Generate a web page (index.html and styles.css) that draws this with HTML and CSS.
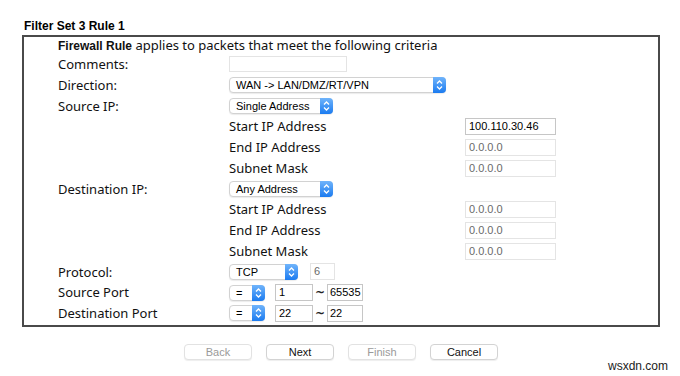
FILE: index.html
```html
<!DOCTYPE html>
<html>
<head>
<meta charset="utf-8">
<link rel="stylesheet" href="styles.css">
</head>
<body>
<div class="page">
  <h1 class="title">Filter Set 3 Rule 1</h1>
  <div class="box">
    <div class="row head"><b>Firewall Rule</b> applies to packets that meet the following criteria</div>
    <div class="row">
      <span>Comments:</span>
      <div class="ctl"><span class="input w-comment"></span></div>
      <span></span>
    </div>
    <div class="row">
      <span>Direction:</span>
      <div class="ctl"><div class="select w-dir"><span class="val">WAN -&gt; LAN/DMZ/RT/VPN</span><span class="step"><svg width="13" height="14" viewBox="0 0 13 14"><polyline points="4,5.5 6.5,3 9,5.5"/><polyline points="4,8.5 6.5,11 9,8.5"/></svg></span></div></div>
      <span></span>
    </div>
    <div class="row">
      <span>Source IP:</span>
      <div class="ctl"><div class="select w-addr"><span class="val">Single Address</span><span class="step"><svg width="13" height="14" viewBox="0 0 13 14"><polyline points="4,5.5 6.5,3 9,5.5"/><polyline points="4,8.5 6.5,11 9,8.5"/></svg></span></div></div>
      <span></span>
    </div>
    <div class="row">
      <span></span>
      <span>Start IP Address</span>
      <div class="ctl"><span class="input on w-ip">100.110.30.46</span></div>
    </div>
    <div class="row">
      <span></span>
      <span>End IP Address</span>
      <div class="ctl"><span class="input w-ip">0.0.0.0</span></div>
    </div>
    <div class="row">
      <span></span>
      <span>Subnet Mask</span>
      <div class="ctl"><span class="input w-ip">0.0.0.0</span></div>
    </div>
    <div class="row">
      <span>Destination IP:</span>
      <div class="ctl"><div class="select w-addr"><span class="val">Any Address</span><span class="step"><svg width="13" height="14" viewBox="0 0 13 14"><polyline points="4,5.5 6.5,3 9,5.5"/><polyline points="4,8.5 6.5,11 9,8.5"/></svg></span></div></div>
      <span></span>
    </div>
    <div class="row">
      <span></span>
      <span>Start IP Address</span>
      <div class="ctl"><span class="input w-ip">0.0.0.0</span></div>
    </div>
    <div class="row">
      <span></span>
      <span>End IP Address</span>
      <div class="ctl"><span class="input w-ip">0.0.0.0</span></div>
    </div>
    <div class="row">
      <span></span>
      <span>Subnet Mask</span>
      <div class="ctl"><span class="input w-ip">0.0.0.0</span></div>
    </div>
    <div class="row">
      <span>Protocol:</span>
      <div class="ctl gap12"><div class="select w-proto"><span class="val">TCP</span><span class="step"><svg width="13" height="14" viewBox="0 0 13 14"><polyline points="4,5.5 6.5,3 9,5.5"/><polyline points="4,8.5 6.5,11 9,8.5"/></svg></span></div><span class="input w-num">6</span></div>
      <span></span>
    </div>
    <div class="row">
      <span>Source Port</span>
      <div class="ctl gap10"><div class="select w-op"><span class="val">=</span><span class="step"><svg width="13" height="14" viewBox="0 0 13 14"><polyline points="4,5.5 6.5,3 9,5.5"/><polyline points="4,8.5 6.5,11 9,8.5"/></svg></span></div><span class="input on w-port">1</span><span class="tilde">~</span><span class="input on w-port2">65535</span></div>
      <span></span>
    </div>
    <div class="row">
      <span>Destination Port</span>
      <div class="ctl gap10"><div class="select w-op"><span class="val">=</span><span class="step"><svg width="13" height="14" viewBox="0 0 13 14"><polyline points="4,5.5 6.5,3 9,5.5"/><polyline points="4,8.5 6.5,11 9,8.5"/></svg></span></div><span class="input on w-port">22</span><span class="tilde">~</span><span class="input on w-port2">22</span></div>
      <span></span>
    </div>
  </div>
  <div class="buttons">
    <span class="btn off">Back</span>
    <span class="btn">Next</span>
    <span class="btn off">Finish</span>
    <span class="btn">Cancel</span>
  </div>
  <div class="watermark">wsxdn.com</div>
</div>
</body>
</html>
```

FILE: styles.css
```css
* { box-sizing: border-box; }

body {
  margin: 0;
  background: #fff;
  font-family: "Noto Sans", "DejaVu Sans", sans-serif;
  color: #111;
}

.page {
  position: relative;
  width: 680px;
  height: 376px;
  padding: 19px 20px 0 22px;
}

.title {
  margin: 0 0 2px 2px;
  font: bold 12px/14px "Liberation Sans", Arial, sans-serif;
  color: #000;
}

.box {
  width: 638px;
  height: 292px;
  border: 2px solid #4a4a4a;
  padding-left: 34px;
}

.row {
  display: grid;
  grid-template-columns: 171px 236px 1fr;
  align-items: center;
  height: 20.75px;
  font-size: 13px;
  line-height: 20.75px;
  white-space: nowrap;
}

.row.head {
  display: block;
  height: 17px;
  line-height: 17px;
}

.head b {
  font: bold 12px "Liberation Sans", Arial, sans-serif;
}

.ctl {
  display: flex;
  align-items: center;
  height: 20.75px;
}

.gap12 { gap: 12px; }
.gap10 { gap: 10px; }

.input {
  display: block;
  height: 17px;
  border: 1px solid #e4e4e4;
  background: #fff;
  padding: 0 3px;
  font: 11px/15px "Liberation Sans", Arial, sans-serif;
  color: #6a6a6a;
  overflow: hidden;
}

.input.on {
  border-color: #c6c6c6;
  color: #000;
}

.w-comment { width: 118px; height: 16px; }
.w-ip { width: 91px; }
.w-num { width: 25px; }
.w-port { width: 38px; }
.w-port2 { width: 36px; padding: 0 2px; }

.tilde {
  width: 14px;
  margin: 0 -10px;
  text-align: center;
  font: bold 12px/17px "DejaVu Sans", sans-serif;
  color: #222;
}

.select {
  display: flex;
  height: 16px;
  border: 1px solid #d2d2d2;
  border-radius: 4px;
  background: #fff;
  box-shadow: 0 1px 1px rgba(0, 0, 0, 0.08);
  font: 11px/14px "Liberation Sans", Arial, sans-serif;
  color: #000;
}

.select .val {
  flex: 1;
  padding-left: 6px;
  overflow: hidden;
}

.step {
  width: 13px;
  height: 16px;
  margin: -1px -1px -1px 0;
  border-radius: 0 4px 4px 0;
  background: linear-gradient(#70b4fb, #1b7bf0);
  display: flex;
  align-items: center;
}

.step svg {
  display: block;
  fill: none;
  stroke: #fff;
  stroke-width: 1.3;
}

.w-dir { width: 217px; }
.w-addr { width: 104px; }
.w-proto { width: 69px; }
.w-op { width: 36px; }

.buttons {
  display: flex;
  justify-content: center;
  gap: 14px;
  margin-top: 17px;
}

.btn {
  display: block;
  width: 68px;
  height: 16px;
  border: 1px solid #d3d3d3;
  border-radius: 4px;
  background: #fff;
  box-shadow: 0 1px 1px rgba(0, 0, 0, 0.07);
  text-align: center;
  font: 11px/14px "Liberation Sans", Arial, sans-serif;
  color: #111;
}

.btn.off {
  color: #9a9a9a;
  border-color: #e2e2e2;
}

.watermark {
  position: absolute;
  right: 12px;
  top: 359px;
  font: 12px/14px "Liberation Sans", Arial, sans-serif;
  color: #222;
}
```
